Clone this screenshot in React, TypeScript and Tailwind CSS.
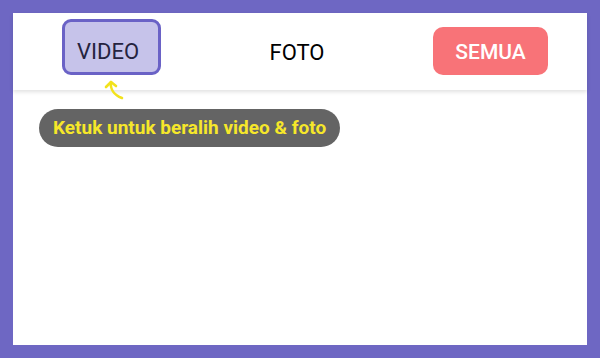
import React from "react";

function CurlArrow() {
  return (
    <svg
      width="26"
      height="24"
      viewBox="0 0 26 24"
      className="absolute left-[90px] top-[66px]"
      fill="none"
      stroke="#f2e21c"
      strokeWidth="2.6"
      strokeLinecap="round"
      strokeLinejoin="round"
    >
      <path d="M8 3 C7 10 11 16 19 19" />
      <path d="M3 8 L8 3 L13 7" />
    </svg>
  );
}

export default function App() {
  return (
    <div
      className="w-[600px] h-[358px] bg-[#6e67c3] p-[13px]"
      style={{ fontFamily: "Roboto, 'Noto Sans', sans-serif" }}
    >
      <div className="relative h-full w-full bg-white">
        <header className="relative flex h-[77px] items-start justify-between pl-[49px] pr-[39px] shadow-[0_2px_4px_rgba(0,0,0,0.12)]">
          <button className="mt-[6px] flex h-[56px] w-[99px] items-center justify-center rounded-[9px] border-[3px] border-[#6a62c6] bg-[#c6c3ea] pt-[8px] pr-[7px] text-[22px] text-[#25233f]">
            VIDEO
          </button>
          <span className="mt-[27px] text-[22px] leading-[26px] text-black">FOTO</span>
          <button className="mt-[14px] flex h-[48px] w-[115px] items-center justify-center rounded-[10px] bg-[#f87378] pt-[4px] text-[21px] font-medium text-white">
            SEMUA
          </button>
        </header>
        <CurlArrow />
        <div className="ml-[26px] mt-[19px] inline-flex h-[38px] items-center rounded-full bg-[#646464] px-[14px] text-[19px] font-bold text-[#f6e72a]">
          Ketuk untuk beralih video &amp; foto
        </div>
      </div>
    </div>
  );
}
